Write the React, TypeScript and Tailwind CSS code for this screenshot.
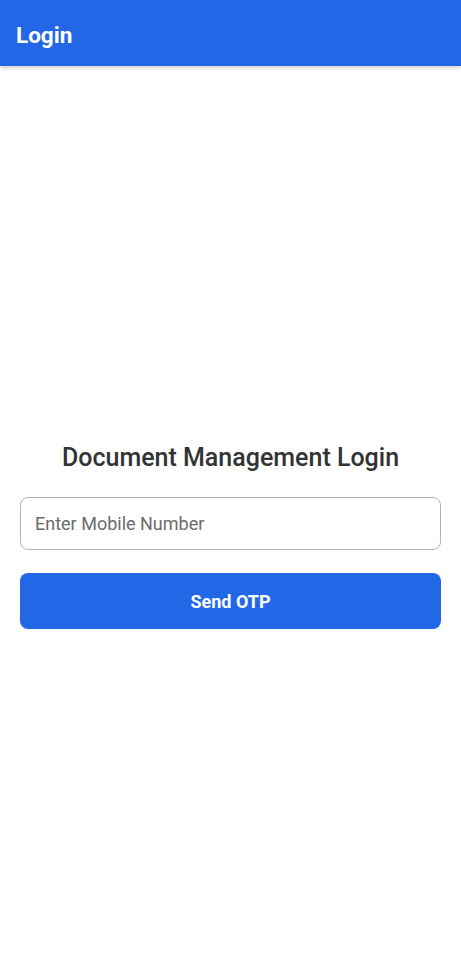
export default function App() {
  return (
    <div className="flex min-h-[973px] flex-col bg-white font-['Roboto',sans-serif]">
      {/* Header */}
      <header className="flex h-[66px] items-center bg-[#2268e6] px-4 pt-[5px] shadow-[0_2px_4px_rgba(0,0,0,0.18)]">
        <h1 className="text-[22.5px] font-bold text-white">Login</h1>
      </header>

      {/* Form */}
      <main className="flex flex-1 flex-col justify-center px-5 pt-[26px]">
        <h2 className="mb-[21px] pt-[3px] text-center text-[25px] font-medium text-[#333333]">
          Document Management Login
        </h2>
        <input
          type="tel"
          placeholder="Enter Mobile Number"
          className="h-[53px] w-full rounded-lg border border-[#b3b3b3] px-[14px] text-[18px] text-[#333] outline-none placeholder:text-[#6b6b6b]"
        />
        <button className="mt-[23px] h-[56px] w-full rounded-lg bg-[#2268e6] text-[18px] font-bold text-white">
          Send OTP
        </button>
      </main>
    </div>
  )
}
